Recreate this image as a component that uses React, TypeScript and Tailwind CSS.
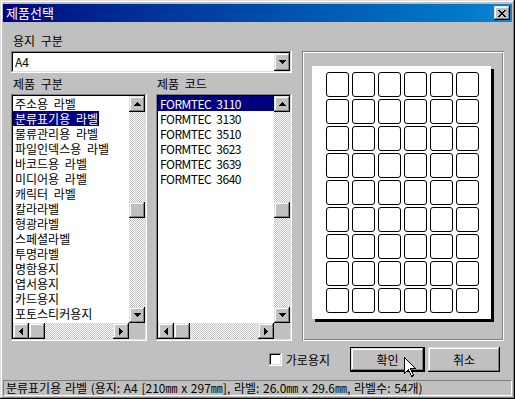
const raised =
  'bg-[#c0c0c0] shadow-[inset_-1px_-1px_#000,inset_1px_1px_#dfdfdf,inset_-2px_-2px_#808080,inset_2px_2px_#fff]'
const sunken =
  'shadow-[inset_-1px_-1px_#fff,inset_1px_1px_#808080,inset_-2px_-2px_#dfdfdf,inset_2px_2px_#000]'
const dither = 'bg-[repeating-conic-gradient(#c0c0c0_0_25%,#fff_0_50%)] bg-[length:2px_2px]'

const categories = [
  '주소용 라벨',
  '분류표기용 라벨',
  '물류관리용 라벨',
  '파일인덱스용 라벨',
  '바코드용 라벨',
  '미디어용 라벨',
  '캐릭터 라벨',
  '칼라라벨',
  '형광라벨',
  '스페셜라벨',
  '투명라벨',
  '명함용지',
  '엽서용지',
  '카드용지',
  '포토스티커용지',
]

const codes = ['FORMTEC 3110', 'FORMTEC 3130', 'FORMTEC 3510', 'FORMTEC 3623', 'FORMTEC 3639', 'FORMTEC 3640']

function Arrow({ dir }: { dir: 'up' | 'down' | 'left' | 'right' }) {
  const pts = {
    up: '3.5,0 7,4 0,4',
    down: '0,0 7,0 3.5,4',
    left: '4,0 4,7 0,3.5',
    right: '0,0 0,7 4,3.5',
  }[dir]
  const vertical = dir === 'up' || dir === 'down'
  return (
    <svg width={vertical ? 7 : 4} height={vertical ? 4 : 7} shapeRendering="crispEdges">
      <polygon points={pts} fill="#000" />
    </svg>
  )
}

function ScrollButton({ dir }: { dir: 'up' | 'down' | 'left' | 'right' }) {
  return (
    <div className={`w-4 h-4 shrink-0 flex items-center justify-center ${raised}`}>
      <Arrow dir={dir} />
    </div>
  )
}

function ListBox({
  items,
  selected,
  fitSelection,
  narrow,
}: {
  items: string[]
  selected: number
  fitSelection?: boolean
  narrow?: boolean
}) {
  return (
    <div className={`w-[136px] h-[247px] bg-white p-[2px] flex flex-col ${sunken}`}>
      <div className="flex flex-1 min-h-0">
        <div className={`flex-1 overflow-hidden ${narrow ? 'tracking-[-0.5px]' : ''}`}>
          {items.map((item, i) => (
            <div
              key={item}
              className={`h-[15px] leading-[15px] pl-[2px] whitespace-nowrap ${
                i === selected ? 'bg-[#000080] text-white' : 'text-black'
              } ${i === selected && fitSelection ? 'w-fit pr-[1px]' : ''}`}
            >
              {item}
            </div>
          ))}
        </div>
        {/* vertical scrollbar */}
        <div className={`w-4 flex flex-col ${dither}`}>
          <ScrollButton dir="up" />
          <div className="flex-1">
            <div className={`w-4 h-4 mt-[90px] ${raised}`} />
          </div>
          <ScrollButton dir="down" />
        </div>
      </div>
      {/* horizontal scrollbar */}
      <div className="flex h-4">
        <div className={`flex flex-1 ${dither}`}>
          <ScrollButton dir="left" />
          <div className={`w-4 h-4 ${raised}`} />
          <div className="flex-1" />
          <ScrollButton dir="right" />
        </div>
        <div className="w-4 bg-[#c0c0c0]" />
      </div>
    </div>
  )
}

export default function App() {
  return (
    <div
      className={`relative w-[515px] h-[399px] p-[3px] flex flex-col text-[12px] [word-spacing:3px] font-['Noto_Sans_CJK_KR',sans-serif] text-black bg-[#c0c0c0] shadow-[inset_-1px_-1px_#000,inset_1px_1px_#dfdfdf,inset_-2px_-2px_#808080,inset_2px_2px_#fff]`}
    >
      {/* Title bar */}
      <div className="mt-[1px] h-[18px] flex items-center justify-between bg-gradient-to-r from-[#000080] to-[#1084d0] pl-[3px] pr-[2px]">
        <span className="text-white text-[13px] leading-[18px]">제품선택</span>
        <div className={`w-4 h-[14px] flex items-center justify-center ${raised}`}>
          <svg width="8" height="7" shapeRendering="crispEdges">
            <path d="M0 0h2v1h-2zM6 0h2v1h-2zM1 1h2v1h-2zM5 1h2v1h-2zM2 2h4v1h-4zM3 3h2v1h-2zM2 4h4v1h-4zM1 5h2v1h-2zM5 5h2v1h-2zM0 6h2v1h-2zM6 6h2v1h-2z" fill="#000" />
          </svg>
        </div>
      </div>

      {/* Body */}
      <div className="flex flex-col px-[8px]">
        <div className="flex gap-[10px]">
          {/* Left column */}
          <div className="w-[281px] flex flex-col pt-[12px]">
            <div className="h-[14px] leading-[14px] pl-[2px]">용지 구분</div>
            <div className={`mt-[3px] h-[22px] bg-white p-[2px] flex ${sunken}`}>
              <div className="flex-1 leading-[18px] pl-[2px]">A4</div>
              <div className={`w-4 h-[18px] flex items-center justify-center ${raised}`}>
                <Arrow dir="down" />
              </div>
            </div>
            <div className="mt-[4px] flex gap-[9px]">
              <div className="flex flex-col">
                <div className="h-[14px] leading-[14px] pl-[2px]">제품 구분</div>
                <div className="mt-[3px]">
                  <ListBox items={categories} selected={1} fitSelection />
                </div>
              </div>
              <div className="flex flex-col">
                <div className="h-[14px] leading-[14px] pl-[1px]">제품 코드</div>
                <div className="mt-[3px]">
                  <ListBox items={codes} selected={0} narrow />
                </div>
              </div>
            </div>
          </div>

          {/* Preview */}
          <div className="mt-[29px] w-[202px] h-[290px] pt-[15px] pl-[10px] shadow-[inset_1px_1px_#808080,inset_-1px_-1px_#fff,inset_2px_2px_#fff,inset_-2px_-2px_#808080]">
            <div className="w-[179px] h-[253px] bg-white shadow-[3px_3px_0_#000] pt-[6px] pl-[14px]">
              <div className="grid grid-cols-[repeat(6,23px)] auto-rows-[25px] gap-x-[3px] gap-y-[2px]">
                {Array.from({ length: 54 }).map((_, i) => (
                  <div key={i} className="border border-black rounded-[3px]" />
                ))}
              </div>
            </div>
          </div>
        </div>

        {/* Buttons row */}
        <div className="mt-[6px] h-[25px] flex items-center justify-end pr-[4px]">
          <div className={`w-[13px] h-[13px] bg-white ${sunken}`} />
          <span className="ml-[4px] leading-[14px]">가로용지</span>
          <div className="ml-[20px] w-[75px] h-[25px] border border-black">
            <div className={`w-full h-full flex items-center justify-center ${raised}`}>확인</div>
          </div>
          <div className={`ml-[3px] w-[72px] h-[25px] flex items-center justify-center ${raised}`}>취소</div>
        </div>
      </div>

      {/* Status bar */}
      <div className="mt-[8px] h-[16px] leading-[14px] pl-[2px] [word-spacing:1px] border border-t-[#808080] border-l-[#808080] border-r-white border-b-white whitespace-nowrap overflow-hidden">
        분류표기용 라벨 (용지: A4 [210㎜ x 297㎜], 라벨: 26.0㎜ x 29.6㎜, 라벨수: 54개)
      </div>

      {/* Mouse cursor */}
      <svg className="absolute left-[404px] top-[357px]" width="12" height="20" shapeRendering="crispEdges">
        <path d="M0.5 0.5 L0.5 16.5 L4.5 12.5 L7.5 19.5 L9.5 18.5 L6.5 11.5 L11.5 11.5 Z" fill="#fff" stroke="#000" />
      </svg>
    </div>
  )
}
